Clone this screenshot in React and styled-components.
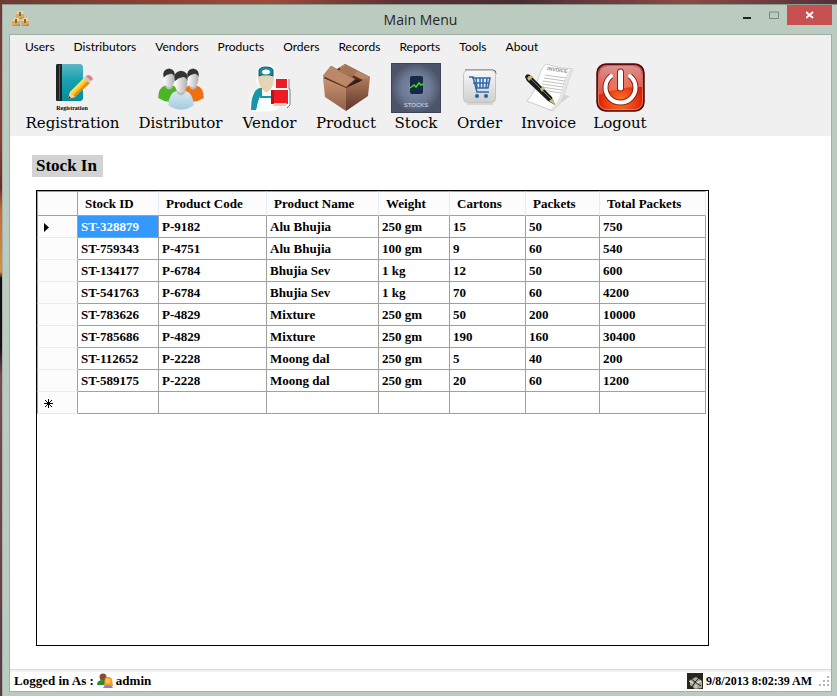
import React from 'react'
import styled, { createGlobalStyle } from 'styled-components'

const GlobalStyle = createGlobalStyle`
  * {
    box-sizing: border-box;
  }

  body {
    margin: 0;
    background: #57282a;
  }

  button {
    margin: 0;
    padding: 0;
    border: 0;
    background: none;
    color: inherit;
    font: inherit;
  }
`

const Desktop = styled.div`
  min-height: 100vh;
  padding: 4px 0 0 2px;
  display: flex;
  background:
    linear-gradient(90deg, #6d3a32 0%, #8c4030 18%, #a04a38 32%, #5c3034 48%, #4a2c36 62%, #8c4a44 82%, #54303a 100%) top / 100% 4px no-repeat,
    linear-gradient(180deg, #6b3a38 0%, #8a4034 20%, #6a2c28 27%, #c06a38 30%, #d89040 39%, #100c14 40%, #181018 50%, #7a4a50 54%, #5a3a44 100%);
`

const Window = styled.div`
  flex: 1;
  display: flex;
  flex-direction: column;
  padding: 0 5px 4px 6px;
  background: #bccbc0;
  border-top: 1px solid #8b9a90;
  border-left: 1px solid #a3b2a8;
`

const TitleBar = styled.header`
  display: grid;
  grid-template-columns: 1fr auto 1fr;
  height: 29px;
`

const AppIcon = styled.svg`
  width: 17px;
  height: 17px;
  margin: 6px 0 0 3px;
`

const Title = styled.h1`
  margin: 0;
  color: #262626;
  font: 400 14px/29px 'Open Sans', sans-serif;
`

const WindowButtons = styled.div`
  display: flex;
  justify-content: flex-end;
`

const WindowButton = styled.button`
  display: flex;
  align-items: center;
  justify-content: center;
  width: ${props => props.$close ? 45 : 27}px;
  height: 20px;
  background: ${props => props.$close ? '#c75050' : 'transparent'};
`

const Client = styled.div`
  flex: 1;
  display: flex;
  flex-direction: column;
  background: #fff;
  border: 1px solid #9fafa4;
`

const MenuBar = styled.nav`
  display: flex;
  gap: 19px;
  height: 24px;
  padding: 0 15px;
  background: #f0f0f0;
  font: 12px/24px Lato, sans-serif;
`

const ToolBar = styled.div`
  display: flex;
  height: 77px;
  padding: 4px 6px 0;
  background: #f0f0f0;
`

const Tool = styled.button`
  display: flex;
  flex-direction: column;
  align-items: center;
  width: ${props => props.$width}px;
  font: 15px/20px 'DejaVu Serif', serif;
  white-space: nowrap;

  svg {
    width: 50px;
    height: 50px;
  }
`

const Main = styled.main`
  flex: 1;
  display: flex;
  flex-direction: column;
  align-items: flex-start;
  padding: 19px 122px 23px 22px;
  font-family: 'Liberation Serif', serif;
`

const Heading = styled.h2`
  margin: 0 0 13px;
  padding: 0 6px 0 4px;
  background: #d3d3d3;
  font-size: 17px;
  line-height: 22px;
`

const GridPanel = styled.div`
  flex: 1;
  align-self: stretch;
  margin-left: 4px;
  border: 1px solid #000;
`

const Table = styled.table`
  width: 669px;
  table-layout: fixed;
  border-collapse: separate;
  border-spacing: 0;
  font-size: 13px;
  font-weight: 700;
`

const HeadCell = styled.th`
  height: 25px;
  padding: 0 0 0 7px;
  background: #fcfcfc;
  border-top: 1px solid #a0a0a0;
  border-right: 1px solid ${props => props.$corner ? '#a0a0a0' : '#e3edf8'};
  border-bottom: 1px solid #a0a0a0;
  border-left: ${props => props.$corner ? '1px solid #a0a0a0' : 0};
  text-align: left;
  line-height: 22px;
`

const RowHead = styled.th`
  height: 22px;
  padding: 2px 0 0 5px;
  background: #fcfcfc;
  border-left: 1px solid #a0a0a0;
  border-right: 1px solid #a0a0a0;
  border-bottom: 1px solid #e3edf8;
  text-align: left;

  svg {
    display: block;
  }
`

const Cell = styled.td`
  height: 22px;
  padding: 0 0 0 3px;
  background: ${props => props.$selected ? '#3399ff' : '#fff'};
  color: ${props => props.$selected ? '#fff' : '#000'};
  border-right: 1px solid #a0a0a0;
  border-bottom: 1px solid #a0a0a0;
  line-height: 21px;
`

const StatusBar = styled.footer`
  display: flex;
  align-items: center;
  justify-content: space-between;
  height: 22px;
  padding: 0 1px 0 4px;
  border-top: 1px solid #d7d7d7;
  box-shadow: inset 0 2px #f3f3f3;
  font-family: 'Liberation Serif', serif;
  font-weight: 700;
`

const StatusItem = styled.span`
  display: flex;
  align-items: center;
  gap: 3px;
  font-size: ${props => props.$small ? 12 : 13}px;
  line-height: 20px;
`

const StatusIcon = styled.svg`
  width: 16px;
  height: 16px;
`

const Grip = styled.svg`
  width: 12px;
  height: 12px;
  margin-left: 3px;
`

const Crate = ({ x, y }) => (
  <g transform={`translate(${x} ${y})`}>
    <path d="M0 3l2-3h5l1 3v5H0z" fill="#d9ab60" />
    <path d="M0 3l2-3h5l1 3z" fill="#efd49c" />
    <path d="M3 1h2v4H3z" fill="#8a6a44" />
    <path d="M0 8h8V6z" fill="#c08a3e" />
  </g>
)

const BookIcon = () => (
  <svg viewBox="0 0 50 50">
    <defs>
      <linearGradient id="cover" x2="0" y2="1">
        <stop offset="0" stopColor="#5db8c4" />
        <stop offset=".45" stopColor="#18a0ae" />
        <stop offset="1" stopColor="#078c9b" />
      </linearGradient>
    </defs>
    <path d="M8 1h25l2 2v33l-2 2H8z" fill="url(#cover)" />
    <path d="M10 1h4v37h-4q-2 0-2-2V3q0-2 2-2z" fill="#222" />
    <path d="M11.500 2v35" stroke="#555" />
    <path d="M20 36l2-7L37 14l5 5-15 15z" fill="#ffbd19" />
    <path d="M22 29l15-15 2 2-15 15z" fill="#ffdc55" />
    <path d="M25 33l15-15 2 2-15 14z" fill="#e88a0b" />
    <path d="M20 36l2-7 5 5z" fill="#f2d3a0" />
    <path d="M20 36l1-3 2 2z" fill="#333" />
    <path d="M36 15l3-3 5 5-3 3z" fill="#c7cbd1" />
    <path d="M38 13l2-1q3 0 5 4l-2 2z" fill="#ed7788" />
    <text x="24" y="47" textAnchor="middle" fontFamily="Liberation Serif" fontWeight="700" fontSize="6">Registration</text>
  </svg>
)

const Person = ({ x, y, fill, scale }) => (
  <g transform={`translate(${x} ${y}) scale(${scale})`}>
    <path d="M-12 29q0-12 8-14h8q8 2 8 14-12 8-24 0z" fill={fill} />
    <path d="M-4 12h8v5q-4 5-8 0z" fill="#bbb" />
    <ellipse cy="8" rx="6" ry="9" fill="url(#face)" />
    <path d="M-6 6Q-8-3 0-4q8 1 6 10-1-4-4-4-5 1-8 4z" fill="#333" />
  </g>
)

const PeopleIcon = () => (
  <svg viewBox="0 0 50 50">
    <defs>
      <linearGradient id="face">
        <stop offset="0" stopColor="#fff" />
        <stop offset="1" stopColor="#b0b0b0" />
      </linearGradient>
      <linearGradient id="shirt" x2="0" y2="1">
        <stop offset="0" stopColor="#d6e8f1" />
        <stop offset="1" stopColor="#a8cbdd" />
      </linearGradient>
    </defs>
    <Person x={13} y={9} fill="#4cb525" scale={0.9} />
    <Person x={37} y={9} fill="#ee7012" scale={0.9} />
    <Person x={25} y={12} fill="url(#shirt)" scale={1.05} />
  </svg>
)

const VendorIcon = () => (
  <svg viewBox="0 0 50 50">
    <path d="M14 8q1-4 7-4 7-1 8 4v6h-2l-1 12h6V17h11v10h1v15H34q-2 5-12 5H9q-3 0-2-11 1-8 10-9l-4-9z" fill="#fff" stroke="#fff" strokeWidth="3" />
    <path d="M44 16v10h1v16l-3 3" fill="none" stroke="#777" />
    <path d="M13 13h16q0 11-5 15l-3 2-4-3q-4-5-4-14z" fill="#e6d5b5" />
    <path d="M14 13V7q1-3 7-3t7 3v6l-3-1h-8z" fill="#178a9b" stroke="#145c68" />
    <ellipse cx="21" cy="9" rx="4" ry="2.500" fill="#fff" />
    <path d="M15 25q-9 2-9 22h5l4-14z" fill="#1796a5" />
    <path d="M16 25l5 5 4-2 2 2v17H12q0-8 3-12z" fill="#f7ffff" />
    <path d="M16 25v9h10" fill="none" stroke="#1796a5" strokeWidth="2" />
    <path d="M31 16h11v9H31zM26 27h17v14H26z" fill="#ed1c24" />
    <path d="M26 27h3v14h-3z" fill="#b2151d" />
    <path d="M29 40h13l-1 3H28z" fill="#e6cfaa" />
  </svg>
)

const BoxIcon = () => (
  <svg viewBox="0 0 50 50">
    <defs>
      <linearGradient id="boxFront" x2="0" y2="1">
        <stop offset="0" stopColor="#c99471" />
        <stop offset="1" stopColor="#906048" />
      </linearGradient>
      <linearGradient id="boxSide" x2="0" y2="1">
        <stop offset="0" stopColor="#b07c5e" />
        <stop offset="1" stopColor="#5d3527" />
      </linearGradient>
    </defs>
    <path d="M2 15L24 1l25 13-24 12z" fill="#54301f" />
    <path d="M18 5l6-4 25 13-7 3z" fill="#bb8565" />
    <path d="M2 15l23 10v23L4 34z" fill="url(#boxFront)" />
    <path d="M49 14L25 25v23l22-15z" fill="url(#boxSide)" />
    <path d="M2 13l8-10 24 13-9 8z" fill="#bb8868" stroke="#8b5b42" strokeWidth=".5" />
    <path d="M17 8l8-6 12 6-6 6z" fill="#a87355" />
    <path d="M26 24l10-8 4 2z" fill="#321a12" />
  </svg>
)

const StockIcon = () => (
  <svg viewBox="0 0 50 50">
    <defs>
      <radialGradient id="stockBack">
        <stop offset="0" stopColor="#7f8fac" />
        <stop offset=".6" stopColor="#6b7892" />
        <stop offset="1" stopColor="#4c546a" />
      </radialGradient>
    </defs>
    <path d="M0 0h50v50H0z" fill="url(#stockBack)" />
    <path d="M.5.5h49v49H.5z" fill="none" stroke="#3c4354" />
    <rect x="19" y="13" width="13" height="18" rx="2" fill="#172949" />
    <path d="M19 25l4-3 2 2 3-4 2 2 2-1" fill="none" stroke="#39dc18" strokeWidth="1.500" />
    <text x="25" y="44" textAnchor="middle" fill="#d9dfea" fontFamily="Liberation Sans" fontSize="6">STOCKS</text>
  </svg>
)

const CartIcon = () => (
  <svg viewBox="0 0 50 50">
    <defs>
      <linearGradient id="tile" x2="0" y2="1">
        <stop offset="0" stopColor="#f7f7f7" />
        <stop offset="1" stopColor="#cfcfcf" />
      </linearGradient>
    </defs>
    <path d="M10 7h28q3 0 3 4" fill="none" stroke="#555" />
    <rect x="8.500" y="7.500" width="32" height="32" rx="4" fill="url(#tile)" stroke="#c4c4c4" />
    <path d="M12 41h26" stroke="#bbb" />
    <path d="M14 14h4l4 15h12M17 15h18l-2 10H20M21 15l1 10M25 15v10M28 15v10M32 15l-1 10M18 20h16" fill="none" stroke="#2f6bab" strokeWidth="1.500" />
    <circle cx="22" cy="33" r="2" fill="#2861a0" />
    <circle cx="31" cy="33" r="2" fill="#2861a0" />
  </svg>
)

const InvoiceIcon = () => (
  <svg viewBox="0 0 50 50">
    <path d="M6 34l12-6 28 5-20 15z" fill="#d4d4d4" />
    <path d="M22 1q14 5 27 5-5 12-8 23T29 48Q16 43 3 38q8-9 11-22Q17 5 22 1z" fill="#fff" stroke="#bbb" strokeWidth=".7" />
    <path d="M49 6q-5 12-8 23T29 48l-3-1q10-10 12-21T46 6z" fill="#e4e4e4" />
    <text x="23" y="7" transform="rotate(8 23 7)" fontFamily="Liberation Sans" fontWeight="700" fontSize="5" fill="#888">INVOICE</text>
    <path d="M21 12l21 3M20 15l21 3M19 18l21 3M18 21l21 3M17 24l21 3M18 27l19 3" stroke="#b2b2b2" strokeWidth=".8" />
    <path d="M1 14q1-4 5-2l22 22 3 8-7-4L3 18z" fill="#191d1d" />
    <path d="M4 13l23 23" stroke="#777" />
    <path d="M3 15l4-3 2 2-4 4zM16 26l3-3 2 2-3 4zM25 38l4-3 2 7z" fill="#c6bb70" />
  </svg>
)

const PowerIcon = () => (
  <svg viewBox="0 0 50 50">
    <defs>
      <radialGradient id="powerRed" cy=".8" r=".8">
        <stop offset="0" stopColor="#ff7825" />
        <stop offset=".55" stopColor="#df2708" />
        <stop offset="1" stopColor="#aa0b0b" />
      </radialGradient>
      <linearGradient id="shine" x2="0" y2="1">
        <stop offset="0" stopColor="#fff" stopOpacity=".55" />
        <stop offset="1" stopColor="#fff" stopOpacity=".2" />
      </linearGradient>
    </defs>
    <rect x="2" y="1" width="47" height="47" rx="9" fill="url(#powerRed)" stroke="#4a0b0b" strokeWidth="1.500" />
    <rect x="3.500" y="2.500" width="44" height="44" rx="8" fill="none" stroke="#f7b0a0" opacity=".5" />
    <path d="M4 12q0-9 9-9h25q9 0 9 9v12q-22-1-43 8z" fill="url(#shine)" />
    <path d="M16 13a15 15 0 1 0 19 0" fill="none" stroke="#981b10" strokeWidth="6" />
    <path d="M16 13a15 15 0 1 0 19 0" fill="none" stroke="#fff" strokeWidth="4" strokeLinecap="round" />
    <path d="M25.500 9v16" stroke="#981b10" strokeWidth="7" strokeLinecap="round" />
    <path d="M25.500 9v16" stroke="#fff" strokeWidth="5" strokeLinecap="round" />
  </svg>
)

const menu = ['Users', 'Distributors', 'Vendors', 'Products', 'Orders', 'Records', 'Reports', 'Tools', 'About']

const tools = [
  { name: 'Registration', width: 113, Icon: BookIcon },
  { name: 'Distributor', width: 103, Icon: PeopleIcon },
  { name: 'Vendor', width: 75, Icon: VendorIcon },
  { name: 'Product', width: 78, Icon: BoxIcon },
  { name: 'Stock', width: 62, Icon: StockIcon },
  { name: 'Order', width: 65, Icon: CartIcon },
  { name: 'Invoice', width: 73, Icon: InvoiceIcon },
  { name: 'Logout', width: 70, Icon: PowerIcon }
]

const columns = [
  ['Stock ID', 81],
  ['Product Code', 108],
  ['Product Name', 112],
  ['Weight', 71],
  ['Cartons', 76],
  ['Packets', 74],
  ['Total Packets', 106]
]

const rows = [
  ['ST-328879', 'P-9182', 'Alu Bhujia', '250 gm', 15, 50, 750],
  ['ST-759343', 'P-4751', 'Alu Bhujia', '100 gm', 9, 60, 540],
  ['ST-134177', 'P-6784', 'Bhujia Sev', '1 kg', 12, 50, 600],
  ['ST-541763', 'P-6784', 'Bhujia Sev', '1 kg', 70, 60, 4200],
  ['ST-783626', 'P-4829', 'Mixture', '250 gm', 50, 200, 10000],
  ['ST-785686', 'P-4829', 'Mixture', '250 gm', 190, 160, 30400],
  ['ST-112652', 'P-2228', 'Moong dal', '250 gm', 5, 40, 200],
  ['ST-589175', 'P-2228', 'Moong dal', '250 gm', 20, 60, 1200],
  ['', '', '', '', '', '', '']
]

const RowMarker = ({ index }) => (
  <svg width="11" height="11" viewBox="0 0 11 11">
    {index === 0 && <path d="M1 1l5 4.500L1 10z" />}
    {index === rows.length - 1 && (
      <path d="M5.500 1v9M1 5.500h9M2 2l7 7M9 2L2 9" stroke="#000" />
    )}
  </svg>
)

const StockTable = () => (
  <Table>
    <colgroup>
      <col style={{ width: 41 }} />
      {columns.map(([name, width]) => <col key={name} style={{ width }} />)}
    </colgroup>
    <thead>
      <tr>
        <HeadCell $corner />
        {columns.map(([name]) => <HeadCell key={name} scope="col">{name}</HeadCell>)}
      </tr>
    </thead>
    <tbody>
      {rows.map((row, i) => (
        <tr key={i}>
          <RowHead scope="row"><RowMarker index={i} /></RowHead>
          {row.map((value, j) => (
            <Cell key={j} $selected={i === 0 && j === 0}>{value}</Cell>
          ))}
        </tr>
      ))}
    </tbody>
  </Table>
)

const App = () => (
  <Desktop>
    <GlobalStyle />
    <Window>
      <TitleBar>
        <AppIcon viewBox="0 0 17 17">
          <Crate x={4} y={0} />
          <Crate x={0} y={7} />
          <Crate x={9} y={7} />
        </AppIcon>
        <Title>Main Menu</Title>
        <WindowButtons>
          <WindowButton aria-label="Minimize">
            <svg width="8" height="10"><path d="M0 7h8v2H0z" fill="#222" /></svg>
          </WindowButton>
          <WindowButton aria-label="Maximize">
            <svg width="10" height="8"><path d="M.5 1h9v6.500h-9z" fill="none" stroke="#7b8a80" /></svg>
          </WindowButton>
          <WindowButton $close aria-label="Close">
            <svg width="8" height="8"><path d="M0 1l7 6M7 1L0 7" stroke="#fff" strokeWidth="2" /></svg>
          </WindowButton>
        </WindowButtons>
      </TitleBar>
      <Client>
        <MenuBar>
          {menu.map(name => <button key={name}>{name}</button>)}
        </MenuBar>
        <ToolBar>
          {tools.map(({ name, width, Icon }) => (
            <Tool key={name} $width={width}>
              <Icon />
              {name}
            </Tool>
          ))}
        </ToolBar>
        <Main>
          <Heading>Stock In</Heading>
          <GridPanel>
            <StockTable />
          </GridPanel>
        </Main>
        <StatusBar>
          <StatusItem>
            Logged in As :
            <StatusIcon viewBox="0 0 16 16">
              <path d="M0 12q0-5 6-5 5 0 5 5z" fill="#2c8b35" />
              <circle cx="6" cy="4" r="3.500" fill="#81512b" />
              <path d="M7 13l1-8q4-3 7 1l1 7z" fill="#f2a01d" />
              <circle cx="11" cy="8" r="2.500" fill="#ffc25a" />
              <path d="M6 15q1-3 5-3t5 3z" fill="#8b7de0" />
            </StatusIcon>
            admin
          </StatusItem>
          <StatusItem $small>
            <StatusIcon viewBox="0 0 16 16">
              <path d="M0 0h16v16H0z" fill="#29261f" />
              <path d="M3 7l6-3 6 4v7l-7 1-5-4z" fill="#aaa699" />
              <path d="M2 4l6 5 6-6M8 9l-4 7M8 9l6 4" stroke="#222" fill="none" />
              <path d="M2 8l4 2M10 10l4-2M9 12v3" stroke="#eee" />
            </StatusIcon>
            9/8/2013 8:02:39 AM
            <Grip viewBox="0 0 12 12">
              <path d="M9 1h2v2H9zM5 5h2v2H5zM9 5h2v2H9zM1 9h2v2H1zM5 9h2v2H5zM9 9h2v2H9z" fill="#b4b4b4" />
            </Grip>
          </StatusItem>
        </StatusBar>
      </Client>
    </Window>
  </Desktop>
)

export default App
